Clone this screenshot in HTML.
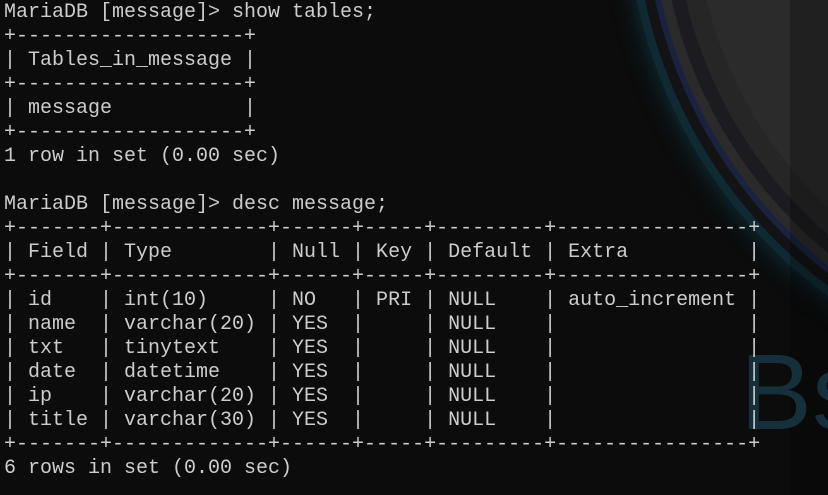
<!DOCTYPE html>
<html><head><meta charset="utf-8"><style>
html,body{margin:0;padding:0;width:828px;height:495px;overflow:hidden;background:#0c0c0c;}
.bg{position:absolute;inset:0;overflow:hidden;}
.ring{position:absolute;left:626px;top:-595px;width:970px;height:970px;border-radius:50%;
 background:#2b2b2b;border:8px solid #0f2a32;box-shadow:0 0 24px #0d3440, inset 0 0 0 10px #131316, inset 0 0 0 16px #1a2240, inset 0 0 0 26px #2a2a2a, inset 0 0 0 40px #1c1c20, inset 0 0 0 60px #262626;}
.strip{position:absolute;left:790px;top:0;width:38px;height:495px;background:rgba(0,0,0,0.25);}
.bs{position:absolute;left:740px;top:338px;font:108px "Liberation Sans",sans-serif;color:#15303b;line-height:1;}
pre{position:absolute;left:4px;top:1px;margin:0;font:20px/24px "Liberation Mono","DejaVu Sans Mono",monospace;color:#cccccc;white-space:pre;}
</style></head><body>
<div class="bg"><div class="ring"></div><div class="strip"></div><div class="bs">Bs</div></div>
<pre>MariaDB [message]&gt; show tables;
+-------------------+
| Tables_in_message |
+-------------------+
| message           |
+-------------------+
1 row in set (0.00 sec)

MariaDB [message]&gt; desc message;
+-------+-------------+------+-----+---------+----------------+
| Field | Type        | Null | Key | Default | Extra          |
+-------+-------------+------+-----+---------+----------------+
| id    | int(10)     | NO   | PRI | NULL    | auto_increment |
| name  | varchar(20) | YES  |     | NULL    |                |
| txt   | tinytext    | YES  |     | NULL    |                |
| date  | datetime    | YES  |     | NULL    |                |
| ip    | varchar(20) | YES  |     | NULL    |                |
| title | varchar(30) | YES  |     | NULL    |                |
+-------+-------------+------+-----+---------+----------------+
6 rows in set (0.00 sec)</pre>
</body></html>
